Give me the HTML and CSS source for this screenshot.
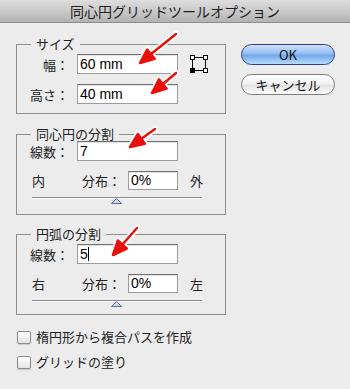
FILE: index.html
```html
<!DOCTYPE html>
<html lang="ja">
<head>
    <meta charset="UTF-8">
    <meta name="viewport" content="width=device-width, initial-scale=1.0">
    <title>同心円グリッドツールオプション</title>
    <link rel="stylesheet" href="styles.css">
</head>
<body>
    <div class="titlebar">同心円グリッドツールオプション</div>

    <div class="dialog">
        <div class="main">
            <fieldset class="group group-size">
                <legend>サイズ</legend>
                <div class="size-body">
                    <div class="rows">
                        <div class="row">
                            <span class="lbl">幅：</span>
                            <div class="field">60 mm</div>
                        </div>
                        <div class="row">
                            <span class="lbl">高さ：</span>
                            <div class="field">40 mm</div>
                        </div>
                    </div>
                    <svg class="ref-icon" width="20" height="20" viewBox="0 0 20 20">
                        <rect x="3.5" y="3.5" width="13" height="13" fill="none" stroke="#000"/>
                        <rect x="1.5" y="1.5" width="4" height="4" fill="#fff" stroke="#000"/>
                        <rect x="14.5" y="1.5" width="4" height="4" fill="#fff" stroke="#000"/>
                        <rect x="14.5" y="14.5" width="4" height="4" fill="#fff" stroke="#000"/>
                        <rect x="1" y="14" width="5" height="5" fill="#000"/>
                    </svg>
                </div>
            </fieldset>

            <fieldset class="group group-ring">
                <legend>同心円の分割</legend>
                <div class="row">
                    <span class="lbl">線数：</span>
                    <div class="field">7</div>
                </div>
                <div class="dist-row">
                    <span class="end-lbl">内</span>
                    <span class="dist-lbl">分布：</span>
                    <div class="field field-small">0%</div>
                    <span class="end-lbl-right">外</span>
                </div>
                <div class="slider">
                    <div class="track"></div>
                    <svg class="thumb" width="11" height="6" viewBox="0 0 11 6">
                        <polygon points="5.5,0.5 10.5,5.5 0.5,5.5" fill="#cfd8ee" stroke="#5b6e9e"/>
                    </svg>
                </div>
            </fieldset>

            <fieldset class="group group-arc">
                <legend>円弧の分割</legend>
                <div class="row">
                    <span class="lbl">線数：</span>
                    <div class="field">5<span class="caret"></span></div>
                </div>
                <div class="dist-row">
                    <span class="end-lbl">右</span>
                    <span class="dist-lbl">分布：</span>
                    <div class="field field-small">0%</div>
                    <span class="end-lbl-right">左</span>
                </div>
                <div class="slider">
                    <div class="track"></div>
                    <svg class="thumb" width="11" height="6" viewBox="0 0 11 6">
                        <polygon points="5.5,0.5 10.5,5.5 0.5,5.5" fill="#cfd8ee" stroke="#5b6e9e"/>
                    </svg>
                </div>
            </fieldset>

            <div class="checks">
                <div class="check-row">
                    <span class="checkbox"></span>
                    <span>楕円形から複合パスを作成</span>
                </div>
                <div class="check-row">
                    <span class="checkbox"></span>
                    <span>グリッドの塗り</span>
                </div>
            </div>
        </div>

        <div class="buttons">
            <button type="button" class="btn btn-ok">OK</button>
            <button type="button" class="btn btn-cancel">キャンセル</button>
        </div>
    </div>

    <!-- red annotation arrows laid over the dialog -->
    <svg class="arrows" width="350" height="389" viewBox="0 0 350 389">
        <g stroke="#fff" stroke-width="6" stroke-linecap="round" stroke-linejoin="round" fill="#fff">
            <line x1="176" y1="34" x2="151" y2="54"/>
            <polygon points="140,63 147.1,49.5 154.7,58.9"/>
            <line x1="176" y1="73" x2="163" y2="84"/>
            <polygon points="152,93 158.9,79.4 166.6,88.6"/>
            <line x1="155" y1="129" x2="141" y2="139"/>
            <polygon points="130,147 137.9,134 144.9,143.7"/>
            <line x1="137" y1="228" x2="122" y2="245"/>
            <polygon points="113,255 117.8,240.5 126.8,248.5"/>
        </g>
        <g stroke="#e8100c" stroke-width="2.5" stroke-linecap="round" stroke-linejoin="round" fill="#e8100c">
            <line x1="176" y1="34" x2="151" y2="54"/>
            <polygon points="140,63 147.1,49.5 154.7,58.9"/>
            <line x1="176" y1="73" x2="163" y2="84"/>
            <polygon points="152,93 158.9,79.4 166.6,88.6"/>
            <line x1="155" y1="129" x2="141" y2="139"/>
            <polygon points="130,147 137.9,134 144.9,143.7"/>
            <line x1="137" y1="228" x2="122" y2="245"/>
            <polygon points="113,255 117.8,240.5 126.8,248.5"/>
        </g>
    </svg>
</body>
</html>
```

FILE: styles.css
```css
* {
    margin: 0;
    padding: 0;
    box-sizing: border-box;
}

body {
    font-family: "Noto Sans CJK JP", "Liberation Sans", sans-serif;
    font-size: 13px;
    color: #222;
    background: #ececec;
    width: 350px;
    height: 389px;
    overflow: hidden;
    position: relative;
}

.titlebar {
    height: 23px;
    line-height: 22px;
    text-align: center;
    font-size: 14px;
    color: #1e1e1e;
    background: linear-gradient(#dedede, #b3b3b3);
    border-bottom: 1px solid #8d8d8d;
}

.dialog {
    display: flex;
    padding: 14px 0 0 16px;
}

.main {
    width: 210px;
}

.group {
    border: 1px solid #8e8e8e;
    padding: 0;
    margin: 0;
}

.group legend {
    margin-left: 14px;
    padding: 0 5px;
    line-height: 14px;
    font-size: 13px;
}

.group-size {
    padding: 3px 0 9px;
}

.group-ring {
    margin-top: 13px;
    padding: 0 0 10px;
}

.group-arc {
    margin-top: 12px;
    padding: 3px 0 7px;
}

.size-body {
    display: flex;
    align-items: flex-start;
}

.rows {
    display: flex;
    flex-direction: column;
    gap: 10px;
}

.row {
    display: flex;
    align-items: center;
    gap: 8px;
}

.lbl {
    width: 52px;
    text-align: right;
}

.field {
    width: 101px;
    height: 20px;
    background: #fff;
    border: 1px solid #9c9c9c;
    border-top-color: #6f6f6f;
    box-shadow: inset 0 1px 1px rgba(0, 0, 0, 0.12);
    padding-left: 2px;
    font-family: "Liberation Sans", sans-serif;
    font-size: 14px;
    line-height: 18px;
    color: #000;
}

.field-small {
    width: 50px;
    height: 19px;
    line-height: 17px;
}

.caret {
    display: inline-block;
    width: 1px;
    height: 14px;
    background: #000;
    vertical-align: -2px;
}

.ref-icon {
    margin-left: 11px;
}

.dist-row {
    display: flex;
    align-items: center;
    margin-top: 10px;
    padding-left: 15px;
}

.end-lbl {
    width: 50px;
}

.dist-lbl {
    width: 46px;
}

.end-lbl-right {
    margin-left: 12px;
}

.slider {
    margin: 7px 0 0 15px;
    width: 170px;
    display: flex;
    flex-direction: column;
    align-items: center;
}

.track {
    width: 100%;
    height: 1px;
    background: #8a8a8a;
    box-shadow: 0 1px 0 #fafafa;
}

.thumb {
    display: block;
    margin-left: -1px;
}

.checks {
    margin-top: 15px;
    display: flex;
    flex-direction: column;
    gap: 11px;
}

.check-row {
    display: flex;
    align-items: center;
    gap: 5px;
    padding-left: 1px;
    line-height: 14px;
}

.checkbox {
    width: 14px;
    height: 13px;
    border: 1px solid #8a8a8a;
    border-radius: 2px;
    background: linear-gradient(#ffffff, #e4e4e4);
    box-shadow: 0 1px 1px rgba(0, 0, 0, 0.15);
}

.buttons {
    display: flex;
    flex-direction: column;
    gap: 9px;
    margin: 7px 0 0 15px;
}

.btn {
    width: 94px;
    height: 21px;
    border-radius: 11px;
    font-family: "Noto Sans CJK JP", "Liberation Sans", sans-serif;
    font-size: 13px;
    color: #111;
    cursor: pointer;
}

.btn-ok {
    border: 1px solid #2c3f8a;
    background: linear-gradient(#cfe1fa 0%, #93bdf0 48%, #6fa4ea 52%, #b6dcfb 100%);
}

.btn-cancel {
    border: 1px solid #7b7b7b;
    background: linear-gradient(#ffffff 0%, #f1f1f1 48%, #e2e2e2 52%, #fbfbfb 100%);
}

.arrows {
    position: absolute;
    left: 0;
    top: 0;
    pointer-events: none;
}
```
